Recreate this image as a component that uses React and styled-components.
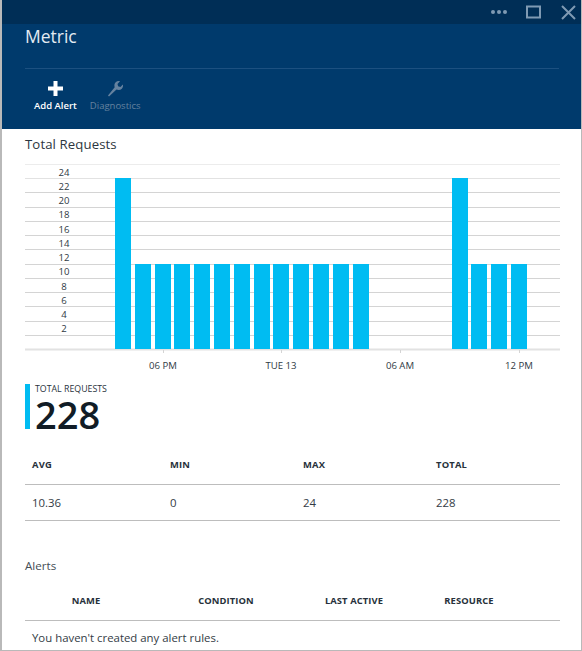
import React from "react";
import styled, { createGlobalStyle } from "styled-components";

const Global = createGlobalStyle`
  html, body { margin: 0; padding: 0; background: #fff; }
  body { font-family: "Open Sans", "Noto Sans", "Liberation Sans", sans-serif; color: #1f2933; }
`;
const Blade = styled.div`
  width: 582px; height: 651px; box-sizing: border-box; overflow: hidden;
  border: solid #b9b9b9; border-width: 0 1px 1px 2px;
  display: flex; flex-direction: column; background: #fff;
`;
const Header = styled.header`
  margin: 0 -1px 0 -2px; height: 129px; background: #003a6c; display: flex; flex-direction: column; flex: none;
`;
const TitleBar = styled.div`
  height: 24px; background: #002e56; display: flex; align-items: center; justify-content: flex-end;
  padding-right: 6px; gap: 20px; flex: none;
`;
const Dots = styled.div`
  display: flex; gap: 2px; margin-right: -1px;
  span { width: 4px; height: 4px; border-radius: 50%; background: #7f9ab3; }
`;
const Title = styled.h1`
  margin: 0 23px 0 25px; font-size: 17.5px; line-height: 24px; font-weight: 400; color: #e3ebf2; height: 44px;
  border-bottom: 1px solid #1c5080;
`;
const Commands = styled.div`display: flex; padding: 11px 0 0 34px; gap: 13px;`;
const Command = styled.div`
  display: flex; flex-direction: column; align-items: center; gap: 3px;
  font-size: 9.5px; line-height: 12px; font-weight: ${p => p.$dim ? 400 : 600};
  color: ${p => p.$dim ? "#65829f" : "#fff"};
  svg { display: block; }
`;
const Body = styled.main`padding: 0 21px 0 23px; flex: 1; display: flex; flex-direction: column;`;
const ChartTitle = styled.h2`
  margin: 6px 0 11px; font-size: 13.2px; line-height: 18px; font-weight: 400; color: #2c3640; letter-spacing: .1px;
`;
const Chart = styled.svg`
  display: block; width: 535px; height: 212px; margin-bottom: 0; flex: none;
  text { font-family: "Open Sans", sans-serif; font-size: 9.6px; fill: #2f3a44; }
`;
const Summary = styled.div`
  margin-top: 8px; display: flex; flex-direction: column; height: 45px;
  border-left: 5px solid #00bcf2; padding-left: 5px; box-sizing: border-box;
`;
const SummaryLabel = styled.div`font-size: 8.8px; line-height: 11px; color: #2a333c;`;
const SummaryValue = styled.div`font-size: 38px; line-height: 34px; font-weight: 600; color: #111c26; margin-top: 2px;`;
const Stats = styled.div`
  margin-top: 19px; display: grid; grid-template-columns: 138px 133px 133px 1fr;
`;
const StatHead = styled.div`
  font-size: 9.4px; font-weight: 700; color: #27313b; height: 36px; line-height: 33px; padding-left: 7px;
  border-bottom: 1px solid #bdbdbd; letter-spacing: .2px;
`;
const StatCell = styled.div`
  font-size: 11.4px; height: 35px; line-height: 35px; padding-left: 7px; border-bottom: 1px solid #bdbdbd; color: #333c45;
`;
const AlertsTitle = styled.h2`margin: 36px 0 0; font-size: 11.6px; line-height: 18px; font-weight: 400; color: #444d55;`;
const AlertsHead = styled.div`
  display: flex; height: 44px; align-items: center; border-bottom: 1px solid #bdbdbd; margin-top: 2px;
  padding-top: 3px; box-sizing: border-box;
`;
const AlertsCol = styled.div`
  width: ${p => p.$w}px; text-align: center; font-size: 9.4px; font-weight: 700; color: #27313b; letter-spacing: .1px;
`;
const Empty = styled.div`font-size: 11.4px; line-height: 18px; padding: 8px 0 0 7px; color: #333c45;`;

const Chrome = ({ children, w = 15, h = 15 }) => (
  <svg width={w} height={h} viewBox={`0 0 ${w} ${h}`} fill="none">{children}</svg>
);

const bars = [0,1,2,3,4,5,6,7,8,9,10,11,12,17,18,19,20];
const base = 185, step = 14.25;
const yFor = v => base - (v / 2) * step;
const labels = [2,4,6,8,10,12,14,16,18,20,22,24];

export default function App() {
  return (
    <Blade>
      <Global />
      <Header>
        <TitleBar>
          <Dots><span /><span /><span /></Dots>
          <Chrome><rect x="1" y="1.500" width="13" height="11" stroke="#7f9ab3" strokeWidth="2" /></Chrome>
          <Chrome><path d="M1 1 14 14M14 1 1 14" stroke="#7f9ab3" strokeWidth="2" /></Chrome>
        </TitleBar>
        <Title>Metric</Title>
        <Commands>
          <Command>
            <svg width="17" height="17" viewBox="0 0 17 17"><path d="M6.500 1h4v5.500H16v4h-5.500V16h-4v-5.500H1v-4h5.500z" fill="#fff" /></svg>
            Add Alert
          </Command>
          <Command $dim>
            <svg width="17" height="17" viewBox="0 0 17 17"><path d="M1 15.500 2 16.500l7.500-7c2 .8 4 .5 5.300-.8 1.100-1.100 1.500-2.800 1.100-4.200l-2.500 2.400-2.300-.6-.6-2.200L13 1.300C11.500.8 9.800 1.200 8.700 2.300 7.400 3.600 7.100 5.500 7.700 7.300z" fill="#65829f" /></svg>
            Diagnostics
          </Command>
        </Commands>
      </Header>
      <Body>
        <ChartTitle>Total Requests</ChartTitle>
        <Chart viewBox="0 0 535 212">
          <line x1="0" x2="535" y1="0.500" y2="0.500" stroke="#ececec" />
          {[...labels, 0].map(v => (
            <line key={v} x1="0" x2="535" y1={Math.round(yFor(v)) + .5} y2={Math.round(yFor(v)) + .5} stroke={v === 0 || v === 24 ? "#e2e2e2" : "#d4d4d4"} strokeWidth={v === 0 ? 2 : 1} />
          ))}
          {bars.map(i => {
            const v = i === 0 || i === 17 ? 24 : 12;
            const y = Math.round(yFor(v));
            return <rect key={i} x={Math.round(90 + i * 19.8)} y={y} width="16" height={base - y} fill="#00bcf2" />;
          })}
          {labels.map(v => (
            <text key={v} x="39" y={yFor(v) - 2.500} textAnchor="middle">{v}</text>
          ))}
          {[[138, "06 PM"], [256, "TUE 13"], [375, "06 AM"], [494, "12 PM"]].map(([x, t]) => (
            <g key={t}>
              <line x1={x + .5} x2={x + .5} y1="186" y2="189" stroke="#d4d4d4" />
              <text x={x} y="205" textAnchor="middle">{t}</text>
            </g>
          ))}
        </Chart>
        <Summary>
          <SummaryLabel>TOTAL REQUESTS</SummaryLabel>
          <SummaryValue>228</SummaryValue>
        </Summary>
        <Stats>
          {["AVG", "MIN", "MAX", "TOTAL"].map(t => <StatHead key={t}>{t}</StatHead>)}
          {["10.36", "0", "24", "228"].map(t => <StatCell key={t}>{t}</StatCell>)}
        </Stats>
        <AlertsTitle>Alerts</AlertsTitle>
        <AlertsHead>
          <AlertsCol $w={122}>NAME</AlertsCol>
          <AlertsCol $w={158}>CONDITION</AlertsCol>
          <AlertsCol $w={98}>LAST ACTIVE</AlertsCol>
          <AlertsCol $w={132}>RESOURCE</AlertsCol>
        </AlertsHead>
        <Empty>You haven't created any alert rules.</Empty>
      </Body>
    </Blade>
  );
}
